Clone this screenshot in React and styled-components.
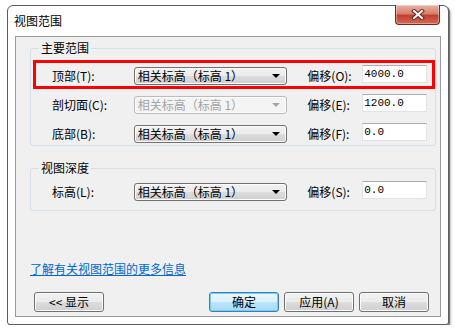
import styled, { createGlobalStyle } from "styled-components"

const GlobalStyle = createGlobalStyle`
    body {
        margin: 0;
        background: #fff;
        font-family: "Noto Sans CJK SC", "Liberation Sans", sans-serif;
        font-size: 12px;
        color: #000;
    }
`;

const rows = [
    { label: "顶部(T):", offsetLabel: "偏移(O):", value: "4000.0", highlight: true },
    { label: "剖切面(C):", offsetLabel: "偏移(E):", value: "1200.0", disabled: true },
    { label: "底部(B):", offsetLabel: "偏移(F):", value: "0.0" },
];

const CloseGlyph = () => (
    <svg width="14" height="11" viewBox="0 0 14 11">
        <path d="M3 2 L11 9 M11 2 L3 9" stroke="#5a2a22" strokeWidth="4" strokeLinecap="square" />
        <path d="M3 2 L11 9 M11 2 L3 9" stroke="#fff" strokeWidth="2" strokeLinecap="square" />
    </svg>
);

const RangeRow = ({ label, offsetLabel, value, highlight, disabled }) => (
    <Row $highlight={highlight}>
        <Label>{label}</Label>
        <Combo $disabled={disabled}>
            <span>相关标高（标高 1）</span>
            <Arrow $disabled={disabled} />
        </Combo>
        <OffsetLabel>{offsetLabel}</OffsetLabel>
        <Field>{value}</Field>
    </Row>
);

const App = () => {
    return (
        <>
            <GlobalStyle />
            <Window>
                <TitleBar>
                    <Title>视图范围</Title>
                    <CloseButton>
                        <CloseGlyph />
                    </CloseButton>
                </TitleBar>
                <Panel>
                    <Group $pt={8} $pb={1}>
                        <Legend>主要范围</Legend>
                        <Rows>
                            {rows.map((r) => (
                                <RangeRow key={r.label} {...r} />
                            ))}
                        </Rows>
                    </Group>
                    <Group $pt={4} $pb={8} $mt={15}>
                        <Legend>视图深度</Legend>
                        <RangeRow label="标高(L):" offsetLabel="偏移(S):" value="0.0" />
                    </Group>
                    <InfoLink>了解有关视图范围的更多信息</InfoLink>
                    <ButtonBar>
                        <Button $push>&lt;&lt; 显示</Button>
                        <Button $default>确定</Button>
                        <Button>应用(A)</Button>
                        <Button>取消</Button>
                    </ButtonBar>
                </Panel>
            </Window>
        </>
    )
}

const Window = styled.div`
    margin: 5px 0 0 7px;
    width: 442px;
    height: 320px;
    box-sizing: border-box;
    border: 1px solid #5c5c5c;
    border-radius: 6px 6px 3px 3px;
    background: #fff;
    box-shadow: 1px 1px 0 #7a7a7a, 2px 2px 2px rgba(0, 0, 0, 0.25);
    display: flex;
    flex-direction: column;
`;

const TitleBar = styled.div`
    height: 30px;
    flex-shrink: 0;
    display: flex;
    justify-content: space-between;
    align-items: flex-start;
`;

const Title = styled.div`
    padding: 8px 0 0 6px;
    line-height: 14px;
    font-size: 12px;
`;

const CloseButton = styled.div`
    margin: -1px 8px 0 0;
    width: 45px;
    height: 20px;
    box-sizing: border-box;
    border: 1px solid #6e2c24;
    border-top: none;
    border-radius: 0 0 4px 4px;
    background: linear-gradient(#eab2a6 0%, #d8806f 45%, #c2402f 55%, #d46a55 100%);
    box-shadow: inset 0 0 0 1px rgba(255, 255, 255, 0.35);
    display: flex;
    align-items: center;
    justify-content: center;
`;

const Panel = styled.div`
    flex: 1;
    margin: 0 7px 7px 7px;
    border: 1px solid #9a9a9a;
    background: #f0f0f0;
    padding: 4px 4px 4px 14px;
    display: flex;
    flex-direction: column;
`;

const Group = styled.fieldset`
    margin: ${(p) => p.$mt || 0}px 0 0 0;
    padding: ${(p) => p.$pt}px 3px ${(p) => p.$pb}px 5px;
    border: 1px solid #d5dfe5;
    border-radius: 3px;
    min-width: 0;
`;

const Legend = styled.legend`
    margin-left: 3px;
    padding: 0 2px;
    line-height: 14px;
    font-size: 12px;
`;

const Rows = styled.div`
    display: flex;
    flex-direction: column;
    gap: 6px;
`;

const Row = styled.div`
    height: 23px;
    box-sizing: border-box;
    padding: 0 5px 1px 16px;
    display: flex;
    align-items: flex-end;
    outline: ${(p) => (p.$highlight ? "3px solid #ff0000" : "none")};
`;

const Label = styled.div`
    width: 82px;
    line-height: 18px;
`;

const Combo = styled.div`
    width: 154px;
    height: 18px;
    box-sizing: border-box;
    border: 1px solid ${(p) => (p.$disabled ? "#b9bcbf" : "#707070")};
    border-radius: 3px;
    padding: 0 6px 0 3px;
    background: ${(p) =>
        p.$disabled
            ? "#f4f4f4"
            : "linear-gradient(#f2f2f2 0%, #ebebeb 50%, #dddddd 50%, #cfcfcf 100%)"};
    box-shadow: inset 0 0 0 1px ${(p) => (p.$disabled ? "#fbfbfb" : "#fcfcfc")};
    color: ${(p) => (p.$disabled ? "#a3a3a3" : "#000")};
    line-height: 16px;
    white-space: nowrap;
    display: flex;
    align-items: center;
    justify-content: space-between;
`;

const Arrow = styled.span`
    width: 0;
    height: 0;
    border-left: 4px solid transparent;
    border-right: 4px solid transparent;
    border-top: 4px solid ${(p) => (p.$disabled ? "#a3a3a3" : "#000")};
`;

const OffsetLabel = styled.div`
    margin-left: 20px;
    width: 55px;
    line-height: 18px;
`;

const Field = styled.div`
    align-self: center;
    width: 65px;
    height: 18px;
    box-sizing: border-box;
    border: 1px solid #e2e3ea;
    border-top-color: #abadb3;
    background: #fff;
    padding-left: 1px;
    font-family: "Liberation Mono", monospace;
    font-size: 11px;
    line-height: 16px;
`;

const InfoLink = styled.a`
    margin-top: auto;
    line-height: 14px;
    color: #0066cc;
    text-decoration: underline;
    cursor: pointer;
`;

const ButtonBar = styled.div`
    margin: 16px 7px 0 4px;
    display: flex;
    gap: 5px;
`;

const Button = styled.button`
    width: 70px;
    height: 20px;
    margin-right: ${(p) => (p.$push ? "auto" : "0")};
    padding: 0;
    border: 1px solid ${(p) => (p.$default ? "#3c7fb1" : "#707070")};
    border-radius: 3px;
    background: ${(p) =>
        p.$default
            ? "linear-gradient(#eaf6fd 0%, #d9f0fc 50%, #bee6fd 50%, #a7d9f5 100%)"
            : "linear-gradient(#f2f2f2 0%, #ebebeb 50%, #dddddd 50%, #cfcfcf 100%)"};
    box-shadow: inset 0 0 0 1px ${(p) => (p.$default ? "#6fd0f7" : "#fcfcfc")};
    font-family: "Noto Sans CJK SC", "Liberation Sans", sans-serif;
    font-size: 12px;
    line-height: 16px;
    color: #000;
`;

export default App;
